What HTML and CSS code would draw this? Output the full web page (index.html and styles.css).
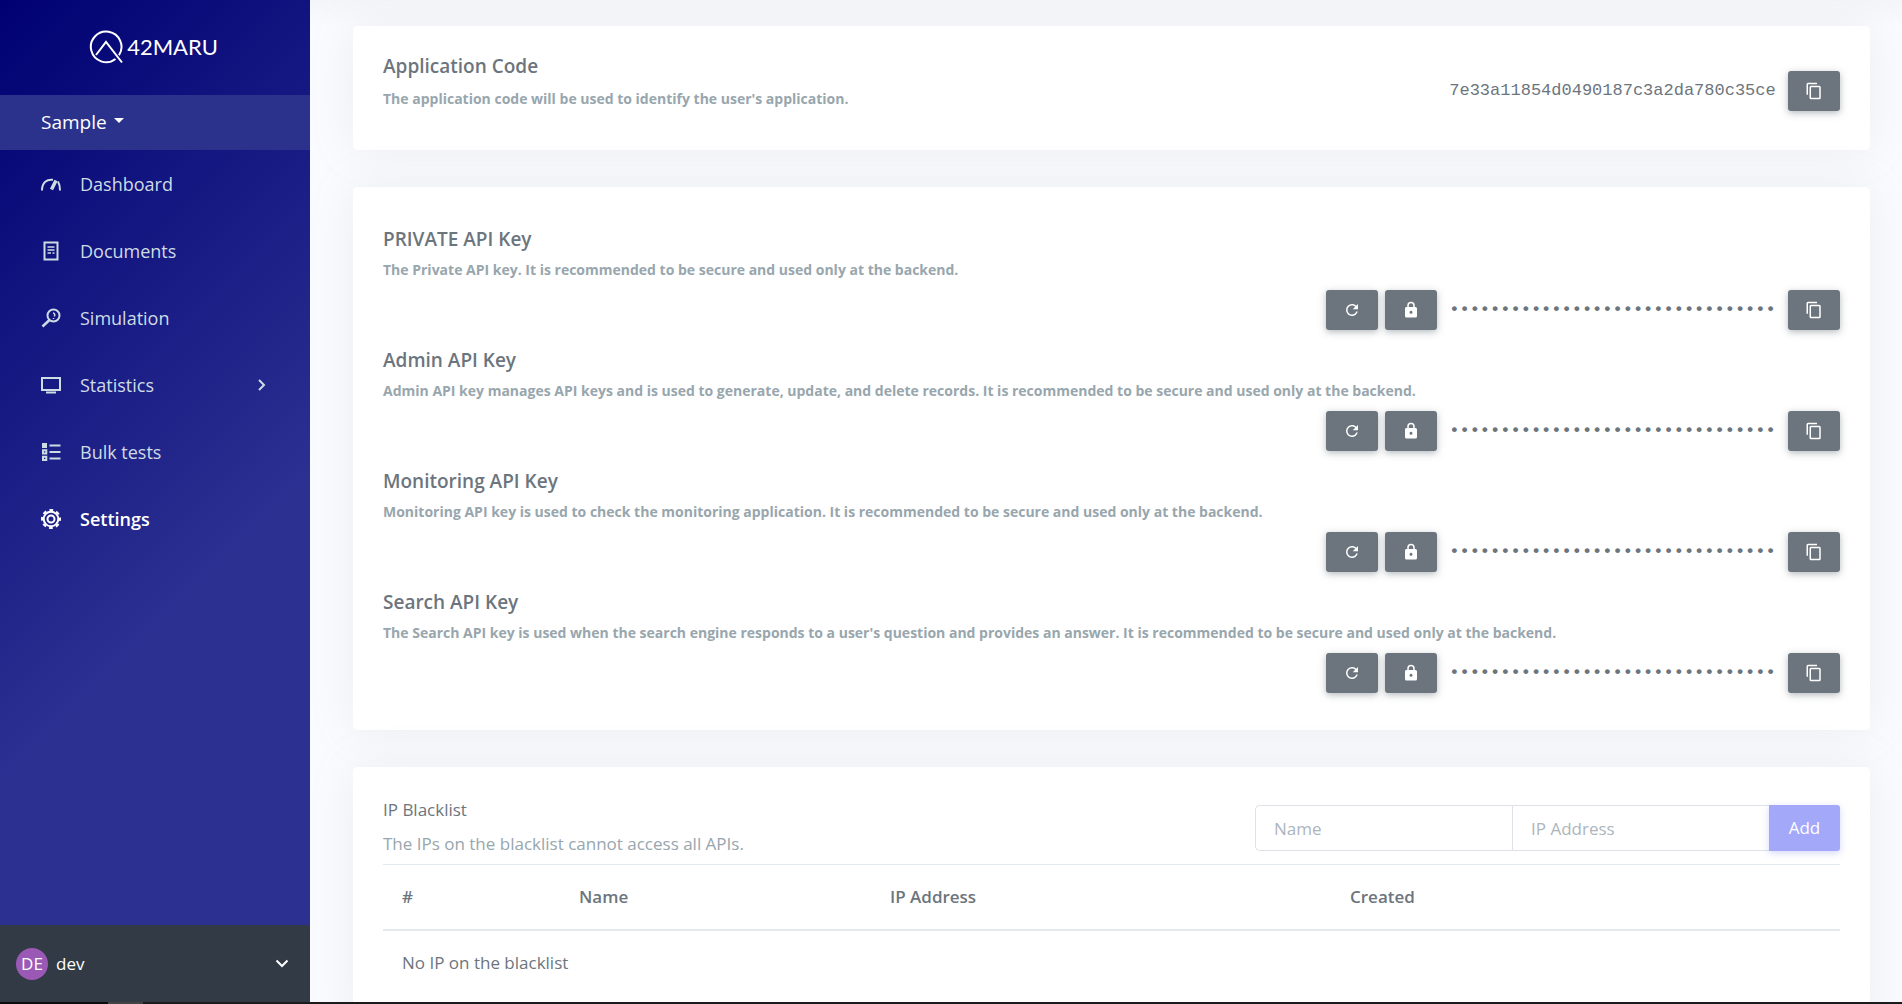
FILE: index.html
```html
<!DOCTYPE html>
<html lang="en">
<head>
<meta charset="utf-8">
<meta name="viewport" content="width=device-width, initial-scale=1">
<title>42MARU - Settings</title>
<link rel="stylesheet" href="styles.css">
</head>
<body>
<svg class="sprite" aria-hidden="true">
  <symbol id="copy" viewBox="0 0 24 24"><path d="M19,21H8V7H19M19,5H8A2,2 0 0,0 6,7V21A2,2 0 0,0 8,23H19A2,2 0 0,0 21,21V7A2,2 0 0,0 19,5M16,1H4A2,2 0 0,0 2,3V17H4V3H16V1Z"/></symbol>
  <symbol id="lock" viewBox="0 0 24 24"><path d="M12,17A2,2 0 0,0 14,15C14,13.89 13.1,13 12,13A2,2 0 0,0 10,15A2,2 0 0,0 12,17M18,8A2,2 0 0,1 20,10V20A2,2 0 0,1 18,22H6A2,2 0 0,1 4,20V10C4,8.89 4.9,8 6,8H7V6A5,5 0 0,1 12,1A5,5 0 0,1 17,6V8H18M12,3A3,3 0 0,0 9,6V8H15V6A3,3 0 0,0 12,3Z"/></symbol>
  <symbol id="refresh" viewBox="0 0 24 24"><path d="M17.65,6.35C16.2,4.9 14.21,4 12,4A8,8 0 0,0 4,12A8,8 0 0,0 12,20C15.73,20 18.84,17.45 19.73,14H17.65C16.83,16.33 14.61,18 12,18A6,6 0 0,1 6,12A6,6 0 0,1 12,6C13.66,6 15.14,6.69 16.22,7.78L13,11H20V4L17.65,6.35Z"/></symbol>
</svg>
<div class="app">
  <aside class="sidebar">
    <a class="brand" href="#">
      <svg class="brand-mark" viewBox="0 0 34 34"><path d="M26.5 29A15.3 15.3 0 1 1 30 25.200M7 25L17 12L33 32.500"/></svg>
      <span>42MARU</span>
    </a>
    <button class="project" type="button">Sample<svg class="caret" viewBox="0 0 10 5"><path d="M0 0H10L5 5Z"/></svg></button>
    <nav class="nav">
      <a href="#"><svg class="nav-icon" viewBox="0 0 20 20"><path d="M1 16.500C1 8 6 5 12 5.800M17 7.500C18.500 10 19 12.500 19 16.500"/><path d="M10.500 15.500L15 6.500" stroke-width="3.500"/></svg>Dashboard</a>
      <a href="#"><svg class="nav-icon" viewBox="0 0 20 20"><path d="M3.500 1.500H16.500V18.500H3.500Z"/><path d="M6.500 6H13.500M6.500 9H13.500M6.500 12H10M11.500 12H13.500" stroke-width="1.500"/></svg>Documents</a>
      <a href="#"><svg class="nav-icon" viewBox="0 0 20 20"><circle cx="12.500" cy="7.500" r="6"/><path d="M8.500 12L1.500 18.500" stroke-width="2.500"/><path d="M12 5A2 2 0 0 1 13.500 8V8.500M12.500 10V11" stroke-width="1.500"/></svg>Simulation</a>
      <a href="#"><svg class="nav-icon" viewBox="0 0 20 20"><path d="M1 3H19V15H1ZM5 17.500H15"/></svg>Statistics<svg class="arrow" viewBox="0 0 8 12"><path d="M1 1L6 6L1 11"/></svg></a>
      <a href="#"><svg class="nav-icon" viewBox="0 0 20 20"><path d="M1 1H6V6H1Z" fill="currentColor" stroke="none"/><path d="M8.500 3.500H19.500M8.500 10H19.500M8.500 16.500H19.500M2 8.200H5.300V11.500H2ZM2 14.700H5.300V18H2Z"/></svg>Bulk tests</a>
      <a class="active" href="#"><svg class="nav-icon" viewBox="0 0 20 20"><circle cx="10" cy="10" r="7.300"/><circle cx="10" cy="10" r="9" stroke-dasharray="3.800 3.269" stroke-dashoffset="1.900"/><circle cx="10" cy="10" r="3.500"/></svg>Settings</a>
    </nav>
    <button class="user" type="button"><span class="avatar">DE</span><span class="user-name">dev</span><svg class="chevron" viewBox="0 0 14 9"><path d="M1.500 1.500L7 7L12.500 1.500"/></svg></button>
  </aside>
  <main class="content">
    <section class="card code-card">
      <div>
        <h2 class="title">Application Code</h2>
        <p class="desc">The application code will be used to identify the user's application.</p>
      </div>
      <div class="controls">
        <code class="key">7e33a11854d0490187c3a2da780c35ce</code>
        <button class="btn" type="button" aria-label="Copy"><svg><use href="#copy"/></svg></button>
      </div>
    </section>

    <section class="card keys-card">
      <div>
        <h2 class="title">PRIVATE API Key</h2>
        <p class="desc">The Private API key. It is recommended to be secure and used only at the backend.</p>
        <div class="controls">
          <button class="btn" type="button" aria-label="Regenerate"><svg><use href="#refresh"/></svg></button>
          <button class="btn" type="button" aria-label="Reveal"><svg><use href="#lock"/></svg></button>
          <code class="key masked">••••••••••••••••••••••••••••••••</code>
          <button class="btn" type="button" aria-label="Copy"><svg><use href="#copy"/></svg></button>
        </div>
      </div>
      <div>
        <h2 class="title">Admin API Key</h2>
        <p class="desc">Admin API key manages API keys and is used to generate, update, and delete records. It is recommended to be secure and used only at the backend.</p>
        <div class="controls">
          <button class="btn" type="button" aria-label="Regenerate"><svg><use href="#refresh"/></svg></button>
          <button class="btn" type="button" aria-label="Reveal"><svg><use href="#lock"/></svg></button>
          <code class="key masked">••••••••••••••••••••••••••••••••</code>
          <button class="btn" type="button" aria-label="Copy"><svg><use href="#copy"/></svg></button>
        </div>
      </div>
      <div>
        <h2 class="title">Monitoring API Key</h2>
        <p class="desc">Monitoring API key is used to check the monitoring application. It is recommended to be secure and used only at the backend.</p>
        <div class="controls">
          <button class="btn" type="button" aria-label="Regenerate"><svg><use href="#refresh"/></svg></button>
          <button class="btn" type="button" aria-label="Reveal"><svg><use href="#lock"/></svg></button>
          <code class="key masked">••••••••••••••••••••••••••••••••</code>
          <button class="btn" type="button" aria-label="Copy"><svg><use href="#copy"/></svg></button>
        </div>
      </div>
      <div>
        <h2 class="title">Search API Key</h2>
        <p class="desc">The Search API key is used when the search engine responds to a user's question and provides an answer. It is recommended to be secure and used only at the backend.</p>
        <div class="controls">
          <button class="btn" type="button" aria-label="Regenerate"><svg><use href="#refresh"/></svg></button>
          <button class="btn" type="button" aria-label="Reveal"><svg><use href="#lock"/></svg></button>
          <code class="key masked">••••••••••••••••••••••••••••••••</code>
          <button class="btn" type="button" aria-label="Copy"><svg><use href="#copy"/></svg></button>
        </div>
      </div>
    </section>

    <section class="card list-card">
      <div class="list-head">
        <div>
          <h2 class="list-title">IP Blacklist</h2>
          <p class="list-desc">The IPs on the blacklist cannot access all APIs.</p>
        </div>
        <form class="add-form">
          <input type="text" placeholder="Name" aria-label="Name">
          <input type="text" placeholder="IP Address" aria-label="IP Address">
          <button type="button">Add</button>
        </form>
      </div>
      <table class="table">
        <colgroup><col class="col-num"><col class="col-name"><col class="col-ip"><col></colgroup>
        <thead><tr><th>#</th><th>Name</th><th>IP Address</th><th>Created</th></tr></thead>
        <tbody><tr><td colspan="4">No IP on the blacklist</td></tr></tbody>
      </table>
    </section>
  </main>
</div>
<footer class="taskbar"></footer>
</body>
</html>
```
FILE: styles.css
```css
* { box-sizing: border-box; }

body {
  margin: 0;
  height: 100vh;
  display: flex;
  flex-direction: column;
  overflow: hidden;
  background: #fafbfe;
  color: #6c757d;
  font: 400 17px/26px "Open Sans", "Noto Sans", sans-serif;
}

h2, p { margin: 0; }
button, input { font: inherit; }
button { cursor: pointer; border: 0; }
a { text-decoration: none; }
.sprite { display: none; }

.app {
  flex: 1;
  min-height: 0;
  display: grid;
  grid-template-columns: 310px minmax(0, 1fr);
}

.taskbar {
  height: 2px;
  background: linear-gradient(90deg, #0b0b0b 108px, #444 108px, #444 143px, #1b1b1d 143px);
}

/* Sidebar */
.sidebar {
  display: flex;
  flex-direction: column;
  min-height: 0;
  background: linear-gradient(135deg, #000073 0%, #2b3091 60%);
}

.brand {
  height: 95px;
  flex: none;
  display: flex;
  align-items: center;
  justify-content: center;
  gap: 4px;
  padding: 0 3px 2px 0;
  color: #fff;
  font: 400 22px/32px Lato, sans-serif;
}
.brand-mark { width: 34px; height: 34px; fill: none; stroke: #fff; stroke-width: 2; }

.project {
  height: 55px;
  flex: none;
  display: flex;
  align-items: center;
  gap: 7px;
  padding: 0 41px 2px;
  background: #2b328c;
  color: #fff;
  font-size: 19px;
  font-weight: 500;
}
.caret { width: 10px; height: 5px; margin-bottom: 2px; fill: #fff; }

.nav { flex: 1; display: flex; flex-direction: column; }
.nav a {
  height: 67px;
  display: flex;
  align-items: center;
  padding: 0 44px 0 41px;
  color: #cedce4;
  font-size: 18px;
}
.nav .active { color: #fff; font-weight: 600; }
.nav-icon { width: 20px; height: 20px; margin-right: 19px; overflow: visible; fill: none; stroke: currentColor; stroke-width: 2; }
.arrow { width: 8px; height: 12px; margin-left: auto; fill: none; stroke: currentColor; stroke-width: 2; }

.user {
  height: 77px;
  flex: none;
  display: flex;
  align-items: center;
  gap: 8px;
  padding: 0 21px 0 16px;
  background: #323a46;
  color: #fff;
}
.avatar {
  width: 32px;
  height: 32px;
  border-radius: 50%;
  background: #9b59b6;
  line-height: 32px;
  text-align: center;
}
.chevron { width: 14px; height: 9px; margin-left: auto; fill: none; stroke: #fff; stroke-width: 2; }

/* Content */
.content {
  display: flex;
  flex-direction: column;
  gap: 37px;
  min-height: 0;
  padding: 26px 32px 0 43px;
  overflow: hidden;
  background: linear-gradient(#f4f5f9, #fafbfe 26px);
}
.card {
  flex: none;
  border-radius: 5px;
  background: #fff;
  box-shadow: 0 0 44px rgba(154, 161, 171, .15);
}

.title { font-size: 19px; font-weight: 600; line-height: 26px; }
.desc { margin-top: 6px; color: #98a6ad; font-size: 14px; font-weight: 700; line-height: 24px; }

.controls {
  display: flex;
  align-items: center;
  justify-content: flex-end;
  gap: 7px;
}
.btn {
  width: 52px;
  height: 40px;
  display: flex;
  align-items: center;
  justify-content: center;
  border-radius: 3px;
  background: #6c757d;
  box-shadow: 0 2px 7px rgba(108, 117, 125, .5);
}
.btn svg { width: 18px; height: 18px; fill: #fff; }
.key {
  width: 337px;
  text-align: center;
  font: 400 17px/26px "Liberation Mono", monospace;
}
.masked { font-weight: 700; }

.code-card {
  display: flex;
  justify-content: space-between;
  align-items: center;
  padding: 27px 30px 22px;
}
.code-card > div:first-child { padding-bottom: 17px; }
.code-card .desc { margin-top: 8px; }

.keys-card {
  display: grid;
  gap: 17px;
  padding: 39px 30px 37px;
}
.keys-card .controls { margin-top: 8px; }

.list-card { padding: 30px 30px 36px; }
.list-head {
  display: flex;
  justify-content: space-between;
  align-items: flex-start;
  padding-bottom: 7px;
}
.list-title { font-size: 17px; font-weight: 400; }
.list-desc { margin-top: 8px; color: #98a6ad; }

.add-form { display: flex; width: 585px; margin-top: 8px; }
.add-form input {
  flex: 1;
  min-width: 0;
  height: 46px;
  padding: 0 18px;
  border: 1px solid #dee2e6;
  border-right: 0;
  background: #fff;
  color: #6c757d;
}
.add-form input:first-child { border-radius: 5px 0 0 5px; }
.add-form input::placeholder { color: #adb5bd; opacity: 1; }
.add-form button {
  width: 71px;
  height: 46px;
  padding: 0;
  border-radius: 0 3px 3px 0;
  background: #a3a8f9;
  box-shadow: 0 2px 7px rgba(114, 124, 245, .3);
  color: #fff;
}

.table {
  width: 100%;
  table-layout: fixed;
  border-collapse: separate;
  border-spacing: 0;
}
.col-num { width: 177px; }
.col-name { width: 311px; }
.col-ip { width: 460px; }
.table th, .table td { padding: 19px; text-align: left; }
.table th { border-top: 1px solid #e3eaef; border-bottom: 2px solid #e3eaef; font-weight: 600; }
```
